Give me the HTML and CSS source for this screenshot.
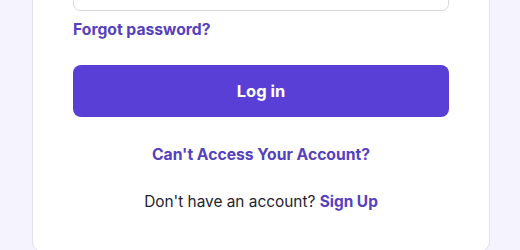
FILE: index.html
```html
<!DOCTYPE html>
<html lang="en">
<head>
<meta charset="utf-8">
<link rel="stylesheet" href="styles.css">
</head>
<body>
<div class="page">
  <div class="card">
    <input class="field" type="password" aria-label="Password">
    <a class="forgot" href="#">Forgot password?</a>
    <button class="login">Log in</button>
    <a class="cant" href="#">Can't Access Your Account?</a>
    <p class="signup">Don't have an account? <a href="#">Sign Up</a></p>
  </div>
</div>
</body>
</html>
```
FILE: styles.css
```css
* { box-sizing: border-box; }
html, body { margin: 0; padding: 0; height: 250px; overflow: hidden; }
body {
  background: #f4f3fe;
  font-family: Inter, "Noto Sans", sans-serif;
  color: #24232f;
}
.page {
  padding-left: 32px;
  width: 490px;
}
.card {
  margin-top: -40px;
  background: #fff;
  border: 1px solid #e2e1ea;
  border-radius: 0 0 10px 10px;
  padding: 0 40px 39px;
  display: flex;
  flex-direction: column;
}
.field {
  height: 50px;
  border: 1px solid #d9d9de;
  border-radius: 7px;
  background: #fff;
}
.forgot {
  margin-top: 9px;
  align-self: flex-start;
  font-size: 15.7px;
  font-weight: 700;
  color: #5541bd;
  text-decoration: none;
  line-height: 20px;
}
.login {
  margin-top: 25px;
  height: 52px;
  border: none;
  border-radius: 8px;
  background: #5a3fd7;
  color: #fff;
  font-family: inherit;
  font-size: 16.5px;
  font-weight: 700;
}
.cant {
  margin-top: 28px;
  align-self: center;
  font-size: 15.7px;
  font-weight: 700;
  color: #5541bd;
  text-decoration: none;
  line-height: 20px;
}
.signup {
  margin: 27px 0 0;
  text-align: center;
  font-size: 15.4px;
  line-height: 20px;
}
.signup a {
  color: #5541bd;
  font-weight: 700;
  text-decoration: none;
}
```
